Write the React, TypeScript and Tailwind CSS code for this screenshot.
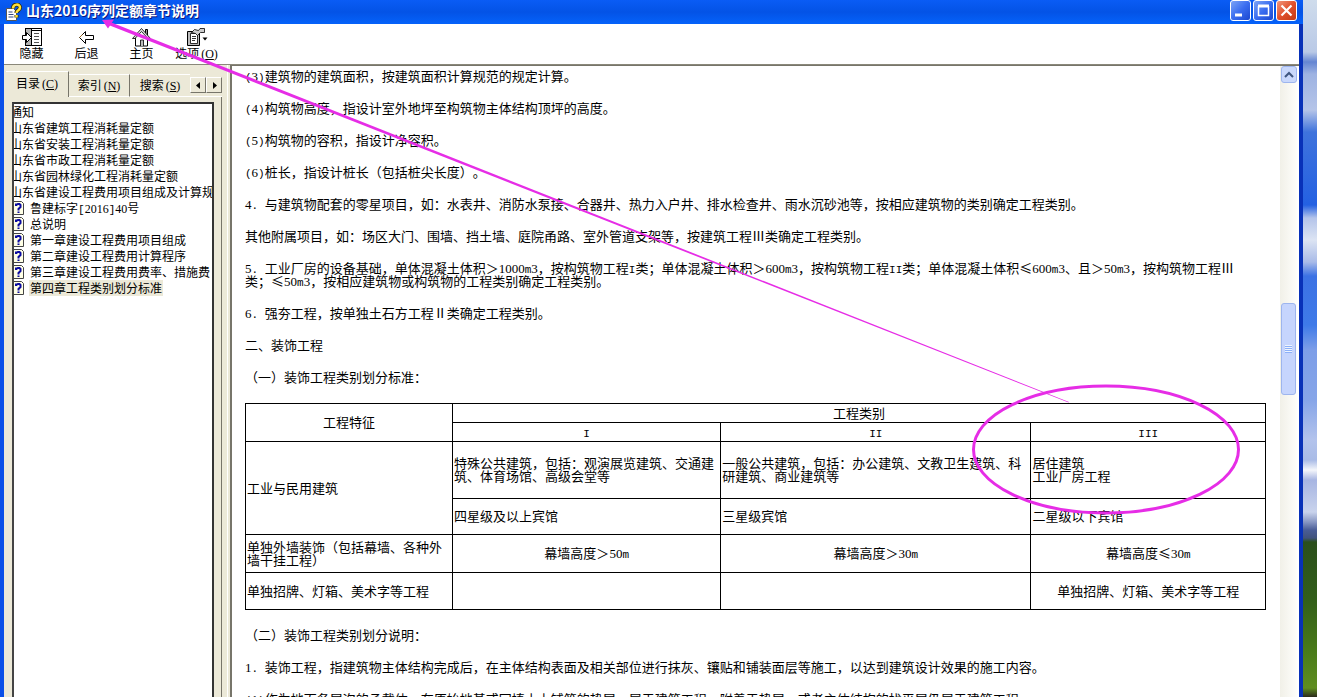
import { Fragment, type ReactNode } from "react";

const contents = [
  { title: "通知", page: false },
  { title: "山东省建筑工程消耗量定额", page: false },
  { title: "山东省安装工程消耗量定额", page: false },
  { title: "山东省市政工程消耗量定额", page: false },
  { title: "山东省园林绿化工程消耗量定额", page: false },
  { title: "山东省建设工程费用项目组成及计算规则", page: false },
  { title: "鲁建标字[2016]40号", page: true },
  { title: "总说明", page: true },
  { title: "第一章建设工程费用项目组成", page: true },
  { title: "第二章建设工程费用计算程序", page: true },
  { title: "第三章建设工程费用费率、措施费", page: true },
  { title: "第四章工程类别划分标准", page: true },
];

const before = [
  "(3)建筑物的建筑面积，按建筑面积计算规范的规定计算。",
  "(4)构筑物高度，指设计室外地坪至构筑物主体结构顶坪的高度。",
  "(5)构筑物的容积，指设计净容积。",
  "(6)桩长，指设计桩长（包括桩尖长度）。",
  "4. 与建筑物配套的零星项目，如：水表井、消防水泵接、合器井、热力入户井、排水检查井、雨水沉砂池等，按相应建筑物的类别确定工程类别。",
  "其他附属项目，如：场区大门、围墙、挡土墙、庭院甬路、室外管道支架等，按建筑工程Ⅲ类确定工程类别。",
  "5. 工业厂房的设备基础，单体混凝土体积＞1000m3，按构筑物工程I类；单体混凝土体积＞600m3，按构筑物工程II类；单体混凝土体积≤600m3、且＞50m3，按构筑物工程Ⅲ\n类；≤50m3，按相应建筑物或构筑物的工程类别确定工程类别。",
  "6. 强夯工程，按单独土石方工程Ⅱ类确定工程类别。",
  "二、装饰工程",
  "（一）装饰工程类别划分标准：",
];

const after = [
  "（二）装饰工程类别划分说明：",
  "1. 装饰工程，指建筑物主体结构完成后，在主体结构表面及相关部位进行抹灰、镶贴和铺装面层等施工，以达到建筑设计效果的施工内容。",
  "(1)作为地面各层次的承载体，在原始地基或回填土上铺筑的垫层，属于建筑工程。附着于垫层，或者主体结构的找平层仍属于建筑工程。",
];

// Digits and other Latin characters take half the width of a Chinese one
const Mixed = ({ text }: { text: string }) => (
  <>
    {text.split(/(\d+|[\x20-\x2f\x3a-\x7e]+|≤)/).map((part, i) => {
      if (i % 2 === 0) return <Fragment key={i}>{part}</Fragment>;
      if (part === "≤")
        return (
          <span key={i} className="inline-block w-[13px] text-center leading-0">
            ≤
          </span>
        );
      return /\d/.test(part) ? (
        <span key={i} className="font-['Liberation_Serif',serif] leading-0">
          {part}
        </span>
      ) : (
        <span
          key={i}
          className="font-['Liberation_Mono',monospace] text-[11px] leading-0 whitespace-pre"
        >
          {part}
        </span>
      );
    })}
  </>
);

const HotKey = ({ letter }: { letter: string }) => (
  <span className="ml-[2px] font-['Liberation_Serif',serif] leading-0">
    (<span className="underline">{letter}</span>)
  </span>
);

const HideIcon = () => (
  <svg width="22" height="20" viewBox="0 0 22 20" fill="none" stroke="#000" shapeRendering="crispEdges">
    <rect x="4.500" y="1.500" width="16" height="17" fill="#fff" />
    <rect x="5" y="2" width="5" height="16" fill="#b5b5b5" stroke="none" />
    <path d="M10.500 1.500v17M11 3.500h9" />
    <path d="M13 6.500h5M13 9.500h5M13 12.500h5M13 15.500h5" stroke="#555" />
    <path d="M1.500 8.500h4v-3l5 5-5 5v-3h-4z" fill="#fff" shapeRendering="auto" />
  </svg>
);

const BackIcon = () => (
  <svg width="22" height="20" viewBox="0 0 22 20" fill="#fff" stroke="#000">
    <path d="M3.500 10.500l6-6v4h8v4h-8v4z" />
    <path d="M3.500 10.500l3-3" stroke="#9c6a20" />
  </svg>
);

const HomeIcon = () => (
  <svg width="22" height="20" viewBox="0 0 22 20" fill="#fff" stroke="#000">
    <path d="M4.500 10v9h12v-9" />
    <path d="M14.500 7V2.500h2V9" fill="#999" />
    <path d="M1.500 11.500l9-10 9 10h-2.500l-6.500-7-6.500 7z" fill="#ddd" strokeWidth=".8" />
    <path d="M9.500 19v-6h3v6" fill="#bbb" strokeWidth=".8" />
  </svg>
);

const OptionsIcon = () => (
  <svg width="22" height="20" viewBox="0 0 22 20" fill="#fff" stroke="#000">
    <path d="M1.500 4.500h12v14h-12z" fill="#bbb" />
    <path d="M4.500 6.500h7v10h-7z" strokeWidth=".8" />
    <path d="M6 9.500h4M6 11.500h4M6 13.500h3" strokeWidth=".8" />
    <path d="M5.500 5.500l3-3 4 1 1.500-2h4.500v4h-4l-3 3-2-2z" fill="#ccc" strokeWidth=".8" />
    <path d="M16.500 10.500h5l-2.500 3z" fill="#000" stroke="none" />
  </svg>
);

const ToolButton = ({ icon, children }: { icon: ReactNode; children: ReactNode }) => (
  <button className="flex w-[55px] flex-col items-center text-[12px] leading-[12px] whitespace-nowrap">
    {icon}
    <span>{children}</span>
  </button>
);

const PageIcon = () => (
  <svg width="10" height="14" viewBox="0 0 10 14" className="mr-[5px] shrink-0">
    <path d="M0 .5h7.500l2 2v11H0" fill="#ffffe6" stroke="#444" />
    <path d="M2 5V3.500h1L4 3h1.500l1 1v2L4.500 8v1.500M4.500 10.500v1.500" stroke="#0a0aa0" strokeWidth="2" fill="none" />
  </svg>
);

const HelpLogo = () => (
  <svg width="16" height="18" viewBox="0 0 16 18">
    <path d="M.5 5.500h7l3 3v9H.5z" fill="#fff" stroke="#555" />
    <path d="M2.500 9h4M2.500 11.500h5M2.500 14h5" stroke="#334a80" />
    <path d="M7 5.500c0-5 7-5 7-1 0 3-3.500 2.500-3.500 5.500M10.500 12v2.500" fill="none" stroke="#332c00" strokeWidth="4" />
    <path d="M7 5.500c0-5 7-5 7-1 0 3-3.500 2.500-3.500 5.500M10.500 12v2.500" fill="none" stroke="#ffe23b" strokeWidth="2.500" />
  </svg>
);

const WindowButton = ({ label, close, children }: { label: string; close?: boolean; children: ReactNode }) => (
  <button
    aria-label={label}
    className={`flex size-[21px] items-center justify-center rounded-[3px] border border-white ${
      close
        ? "bg-linear-to-br from-[#f0957a] via-[#e0502c] to-[#c23a14]"
        : "bg-linear-to-br from-[#7da3f5] via-[#3a6df0] to-[#1c47cf]"
    }`}
  >
    <svg width="17" height="17" viewBox="0 0 17 17" fill="none" stroke="#fff">
      {children}
    </svg>
  </button>
);

const TitleBar = () => (
  <header className="flex h-6 shrink-0 items-center bg-linear-to-b from-[#0a5cf5] via-[#0453e6] to-[#0562fa] pr-[6px] pl-[6px]">
    <HelpLogo />
    <h1 className="ml-1 flex-1 pb-[5px] text-[14px] leading-[16px] font-bold text-white [text-shadow:1px_1px_#0a1883]">
      山东2016序列定额章节说明
    </h1>
    <div className="flex gap-[2px] pb-[3px]">
      <WindowButton label="最小化">
        <path d="M3 13h7" strokeWidth="3" />
      </WindowButton>
      <WindowButton label="最大化">
        <path d="M3.500 4v9.500h10V4" strokeWidth="1.500" />
        <path d="M3 4h11" strokeWidth="3" />
      </WindowButton>
      <WindowButton label="关闭" close>
        <path d="M3.500 3.500l10 10M13.500 3.500l-10 10" strokeWidth="2.200" />
      </WindowButton>
    </div>
  </header>
);

const Sidebar = () => (
  <aside className="flex w-[224px] shrink-0 flex-col border-r border-white pt-[6px] pr-[5px]">
    <div role="tablist" className="flex h-[26px] shrink-0 items-end pl-[2px] text-[12px] leading-[16px] whitespace-nowrap">
      <button role="tab" aria-selected="true" className="h-[26px] w-[63px] border-t border-r border-t-white border-r-[#77756a] pb-1 text-center">
        目录<HotKey letter="C" />
      </button>
      <button role="tab" aria-selected="false" className="h-[23px] w-[61px] border-t border-r border-b border-t-white border-r-[#77756a] border-b-white pb-[2px] text-center">
        索引<HotKey letter="N" />
      </button>
      <button role="tab" aria-selected="false" className="h-[23px] w-[60px] border-t border-b border-t-white border-b-white pb-[2px] text-center">
        搜索<HotKey letter="S" />
      </button>
      <div className="flex h-[23px] flex-1 border-b border-white pt-[3px]">
        {["M9 4v7L5 7.500z", "M6 4v7l4-3.500z"].map((d, i) => (
          <button
            key={d}
            aria-label={i ? "向右滚动" : "向左滚动"}
            className="flex h-4 w-4 items-center justify-center border border-t-white border-r-[#77756a] border-b-[#77756a] border-l-white"
          >
            <svg width="14" height="14" viewBox="0 0 14 14" className="shrink-0">
              <path d={d} />
            </svg>
          </button>
        ))}
      </div>
    </div>
    <div className="flex min-h-0 flex-1 border-r border-[#77756a] pt-[5px] pr-[7px] pl-2">
      <ul className="min-w-0 flex-1 overflow-hidden border-2 border-b-0 border-t-[#333] border-r-[#333] border-l-[#444] bg-white text-[12px] leading-[16px] whitespace-nowrap">
        {contents.map(({ title, page }, i) => (
          <li key={title} className={page ? "h-4" : "-ml-[5px] h-4"}>
            <a href={`#${i}`} className="flex items-center">
              {page && <PageIcon />}
              <span className={i === contents.length - 1 ? "bg-[#ece9d8] px-px" : "px-px"}>
                <Mixed text={title} />
              </span>
            </a>
          </li>
        ))}
      </ul>
    </div>
  </aside>
);

const ClassTable = () => (
  <table className="mt-5 w-full table-fixed border-collapse [&_td]:border [&_td]:border-black [&_td]:px-px [&_td]:pb-[2px] [&_th]:border [&_th]:border-black [&_th]:px-px [&_th]:pb-[2px] [&_th]:font-normal">
    <colgroup>
      <col className="w-[20.3%]" />
      <col className="w-[26.3%]" />
      <col className="w-[30.4%]" />
      <col />
    </colgroup>
    <thead>
      <tr className="h-[19px]">
        <th rowSpan={2}>工程特征</th>
        <th colSpan={3}>工程类别</th>
      </tr>
      <tr className="h-[19px]">
        <th><Mixed text="I" /></th>
        <th><Mixed text="II" /></th>
        <th><Mixed text="III" /></th>
      </tr>
    </thead>
    <tbody>
      <tr className="h-[57px]">
        <td rowSpan={2}>工业与民用建筑</td>
        <td>特殊公共建筑，包括：观演展览建筑、交通建筑、体育场馆、高级会堂等</td>
        <td>一般公共建筑，包括：办公建筑、文教卫生建筑、科研建筑、商业建筑等</td>
        <td>
          居住建筑
          <br />
          工业厂房工程
        </td>
      </tr>
      <tr className="h-[36px]">
        <td>四星级及以上宾馆</td>
        <td>三星级宾馆</td>
        <td>二星级以下宾馆</td>
      </tr>
      <tr className="h-[38px]">
        <td>单独外墙装饰（包括幕墙、各种外墙干挂工程）</td>
        <td className="text-center"><Mixed text="幕墙高度＞50m" /></td>
        <td className="text-center"><Mixed text="幕墙高度＞30m" /></td>
        <td className="text-center"><Mixed text="幕墙高度≤30m" /></td>
      </tr>
      <tr className="h-[37px]">
        <td>单独招牌、灯箱、美术字等工程</td>
        <td />
        <td />
        <td className="text-center">单独招牌、灯箱、美术字等工程</td>
      </tr>
    </tbody>
  </table>
);

const Scrollbar = () => (
  <div className="flex w-[17px] shrink-0 flex-col items-center bg-linear-to-r from-[#f1f0e8] to-[#fefefb]">
    <button aria-label="向上滚动" className="flex h-[17px] w-4 items-center justify-center rounded-[3px] border border-[#9db5ee] bg-[#c9d8fc]">
      <svg width="10" height="8" viewBox="0 0 10 8" fill="none" stroke="#3f5680" strokeWidth="2">
        <path d="M1 6l4-4 4 4" />
      </svg>
    </button>
    <div className="h-[32%]" />
    <div className="mt-[18px] flex h-[92px] w-[15px] flex-col items-center justify-center gap-px rounded-[3px] border border-[#9db5ee] bg-[#c6d5fd]">
      {[0, 1, 2, 3].map((n) => (
        <i key={n} className="h-px w-[7px] bg-[#eef4fe] shadow-[0_1px_#8cb0f8]" />
      ))}
    </div>
  </div>
);

const Paragraphs = ({ items }: { items: string[] }) => (
  <div className="flex flex-col gap-[19px] whitespace-pre-line">
    {items.map((text) => (
      <p key={text}>
        <Mixed text={text} />
      </p>
    ))}
  </div>
);

const Article = () => (
  <main className="min-w-0 flex-1 overflow-hidden bg-white pt-[3px] pr-[14px] pl-[13px] text-[13px] leading-[13px] [text-spacing-trim:space-all]">
    <Paragraphs items={before} />
    <ClassTable />
    <div className="mt-[18px]">
      <Paragraphs items={after} />
    </div>
  </main>
);

// pen marks drawn over the window
const Marks = () => (
  <svg className="pointer-events-none absolute top-0 left-0" width="1317" height="697" viewBox="0 0 1317 697" fill="#e62de6">
    <path d="M107 20.800L1069 402l-.5.600L106 24z" />
    <path d="M102 20l12-.5-6 9z" />
    <ellipse cx="1106" cy="449.500" rx="132.500" ry="63.500" fill="none" stroke="#e62de6" strokeWidth="3" />
  </svg>
);

export default function App() {
  return (
    <div className="relative flex h-screen overflow-hidden font-['Noto_Sans_CJK_SC',sans-serif] text-black">
      <div className="flex min-w-0 flex-1 flex-col bg-[#0a3fd6]">
        <TitleBar />
        <div className="flex min-h-0 flex-1 flex-col border-r-4 border-l-4 border-r-[#0831b8] border-l-[#0b50e8] bg-[#ece9d8]">
          <nav className="flex h-10 shrink-0 bg-white pt-[3px]">
            <ToolButton icon={<HideIcon />}>隐藏</ToolButton>
            <ToolButton icon={<BackIcon />}>后退</ToolButton>
            <ToolButton icon={<HomeIcon />}>主页</ToolButton>
            <ToolButton icon={<OptionsIcon />}>选项<HotKey letter="O" /></ToolButton>
          </nav>
          <div className="flex min-h-0 flex-1 border-t border-[#8a887a]">
            <Sidebar />
            <div className="ml-[2px] flex min-w-0 flex-1 border-t border-l-2 border-[#77756a] bg-white pr-[2px]">
              <Article />
              <Scrollbar />
            </div>
          </div>
        </div>
      </div>
      <div className="w-[14px] shrink-0 bg-[linear-gradient(180deg,#cfdcec_0px,#b9c9e6_52px,#6485d2_62px,#9db2e2_74px,#b5c4e8_110px,#3f73dc_132px,#2461e2_205px,#b4c4ea_218px,#dce4f3_240px,#a9bbe8_262px,#3c72e4_276px,#3f7ae8_325px,#7d9ee8_350px,#86a5e8_400px,#b3c3ec_440px,#a9bbe6_460px,#f4f6fb_470px,#a7b5e2_480px,#c9d3ec_512px,#8796c2_522px,#4a5d96_530px,#41537c_538px,#2b4f1c_542px,#335f1a_600px,#497a1a_650px,#5f8d20_688px,#2b2a1c_697px)]" />
      <Marks />
    </div>
  );
}
